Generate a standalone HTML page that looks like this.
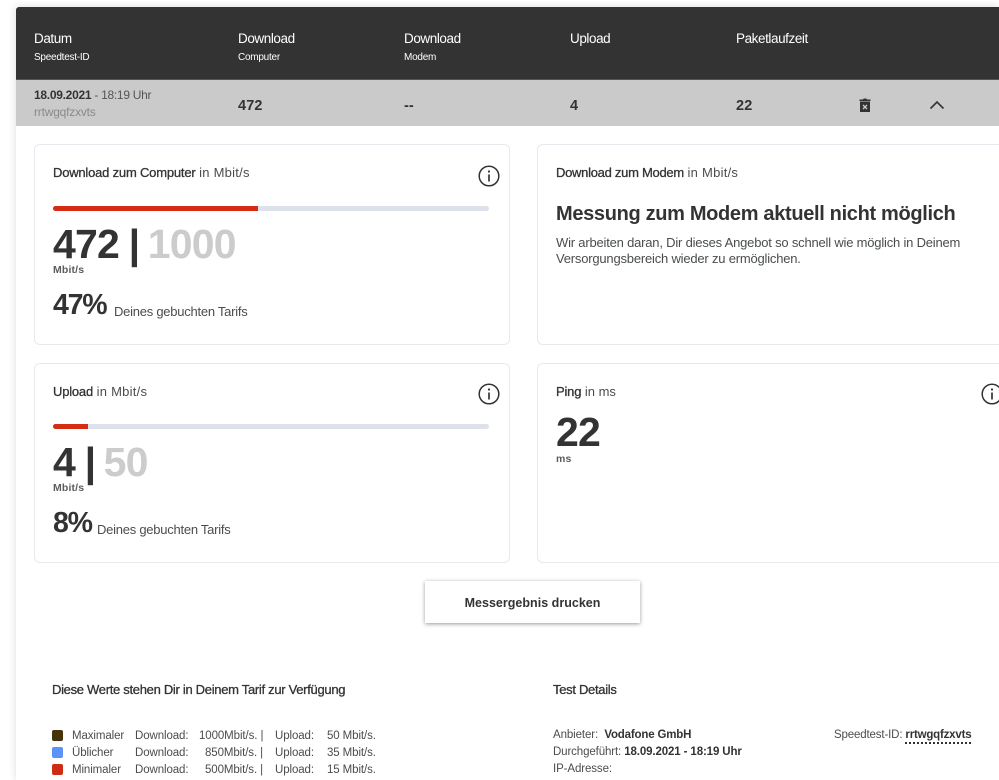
<!DOCTYPE html>
<html lang="de"><head><meta charset="utf-8"><title>Speedtest</title>
<style>
html,body{margin:0;padding:0;background:#fff}
body{width:999px;height:780px;overflow:hidden;position:relative;font-family:"Liberation Sans",sans-serif;color:#333}
.t{position:absolute;white-space:nowrap;line-height:1}
.b{font-weight:bold}
.card{position:absolute;box-sizing:border-box;border:1px solid #e6e9ee;border-radius:6px;background:#fff}
.h{color:#fff;font-size:13.5px;letter-spacing:-.42px}
.s{color:#fff;font-size:10px;letter-spacing:-.25px}
.g{color:#4a4d4e}
.l{font-size:11.5px;color:#4a4d4e;letter-spacing:-.1px}
.big{font-size:41px;font-weight:bold;letter-spacing:-.8px}
.c{color:#333;-webkit-text-stroke:.3px #333;letter-spacing:-.2px}
.u{letter-spacing:.25px}
.m{font-size:10.5px;font-weight:bold;color:#5a5d5e;letter-spacing:.15px}
</style></head><body>
<div style="position:absolute;left:16px;top:7px;width:983px;height:773px;box-shadow:0 0 8px rgba(0,0,0,.14);background:#fff"></div>
<div style="position:absolute;left:16px;top:7px;width:983px;height:72px;background:#333;border-radius:3px 0 0 0"></div>
<div style="position:absolute;left:16px;top:79px;width:983px;height:1px;background:#555"></div>
<div style="position:absolute;left:16px;top:80px;width:983px;height:46px;background:#cacaca"></div>

<div class="t h" style="left:34px;top:32px">Datum</div><div class="t s" style="left:34px;top:53px">Speedtest-ID</div>
<div class="t h" style="left:238px;top:32px">Download</div><div class="t s" style="left:238px;top:53px">Computer</div>
<div class="t h" style="left:404px;top:32px">Download</div><div class="t s" style="left:404px;top:53px">Modem</div>
<div class="t h" style="left:570px;top:32px">Upload</div>
<div class="t h" style="left:736px;top:32px">Paketlaufzeit</div>

<div class="t" style="left:34px;top:89px;font-size:12px;letter-spacing:-.28px;color:#555"><b style="color:#333">18.09.2021</b> - 18:19 Uhr</div>
<div class="t" style="left:34px;top:106px;font-size:12px;letter-spacing:-.2px;color:#8a8a8a">rrtwgqfzxvts</div>
<div class="t b" style="left:238px;top:99px;font-size:14.5px;letter-spacing:.15px">472</div>
<div class="t b" style="left:404px;top:99px;font-size:14.5px">--</div>
<div class="t b" style="left:570px;top:99px;font-size:14.5px">4</div>
<div class="t b" style="left:736px;top:99px;font-size:14.5px;letter-spacing:.15px">22</div>
<svg style="position:absolute;left:858px;top:98px" width="14" height="15" viewBox="0 0 14 15"><path fill="#333" d="M2 3.5h10V14H2zM1.500 1.500h3.500l.6-1h2.800l.6 1h3.500V3h-11z"/><path stroke="#cacaca" stroke-width="1.300" d="M5 7l4 4M9 7l-4 4"/></svg>
<svg style="position:absolute;left:929px;top:100px" width="16" height="10" viewBox="0 0 16 10"><path fill="none" stroke="#333" stroke-width="1.600" d="M1.500 8.500L8 2l6.500 6.500"/></svg>

<div class="card" style="left:34px;top:144px;width:476px;height:201px"></div>
<div class="card" style="left:537px;top:144px;width:480px;height:201px"></div>
<div class="card" style="left:34px;top:363px;width:476px;height:200px"></div>
<div class="card" style="left:537px;top:363px;width:480px;height:200px"></div>

<div class="t g" style="left:53px;top:166px;font-size:13px"><span class="c">Download zum Computer</span> <span class="u">in Mbit/s</span></div>
<svg style="position:absolute;left:478px;top:165px" width="22" height="22" viewBox="0 0 22 22"><circle cx="11" cy="11" r="9.800" fill="none" stroke="#333" stroke-width="1.500"/><path stroke="#333" stroke-width="1.700" d="M11 9.500v7"/><circle cx="11" cy="6.500" r="1.100" fill="#333"/></svg>
<div style="position:absolute;left:53px;top:206px;width:436px;height:5px;background:#dde1ea;border-radius:3px"></div>
<div style="position:absolute;left:53px;top:206px;width:205px;height:5px;background:#d42d12;border-radius:3px 0 0 3px"></div>
<div class="t big" style="left:53px;top:224px">472 <span style="letter-spacing:-2px;margin-left:-1px">|</span> <span style="color:#ccc;letter-spacing:-.8px;margin-left:-1px">1000</span></div>
<div class="t m" style="left:53px;top:265px">Mbit/s</div>
<div class="t b" style="left:53px;top:291px;font-size:28.5px;letter-spacing:-1.2px">47%</div>
<div class="t g" style="left:114px;top:305px;font-size:13px;letter-spacing:-.25px">Deines gebuchten Tarifs</div>

<div class="t g" style="left:556px;top:166px;font-size:13px"><span class="c" style="letter-spacing:-.28px">Download zum Modem</span> <span class="u">in Mbit/s</span></div>
<div class="t b" style="left:556px;top:204px;font-size:20px;letter-spacing:-.33px">Messung zum Modem aktuell nicht möglich</div>
<div class="t g" style="left:556px;top:236px;font-size:13px;letter-spacing:-.2px">Wir arbeiten daran, Dir dieses Angebot so schnell wie möglich in Deinem</div>
<div class="t g" style="left:556px;top:252px;font-size:13px;letter-spacing:-.2px">Versorgungsbereich wieder zu ermöglichen.</div>

<div class="t g" style="left:53px;top:385px;font-size:13px"><span class="c">Upload</span> <span class="u">in Mbit/s</span></div>
<svg style="position:absolute;left:478px;top:383px" width="22" height="22" viewBox="0 0 22 22"><circle cx="11" cy="11" r="9.800" fill="none" stroke="#333" stroke-width="1.500"/><path stroke="#333" stroke-width="1.700" d="M11 9.500v7"/><circle cx="11" cy="6.500" r="1.100" fill="#333"/></svg>
<div style="position:absolute;left:53px;top:424px;width:436px;height:5px;background:#dde1ea;border-radius:3px"></div>
<div style="position:absolute;left:53px;top:424px;width:35px;height:5px;background:#d42d12;border-radius:3px 0 0 3px"></div>
<div class="t big" style="left:53px;top:442px">4 <span style="letter-spacing:-2px;margin-left:-1px">|</span> <span style="color:#ccc;margin-left:-1px">50</span></div>
<div class="t m" style="left:53px;top:483px">Mbit/s</div>
<div class="t b" style="left:53px;top:509px;font-size:28.5px;letter-spacing:-1.2px">8%</div>
<div class="t g" style="left:97px;top:523px;font-size:13px;letter-spacing:-.25px">Deines gebuchten Tarifs</div>

<div class="t g" style="left:556px;top:385px;font-size:13px"><span class="c">Ping</span> in ms</div>
<svg style="position:absolute;left:981px;top:383px" width="22" height="22" viewBox="0 0 22 22"><circle cx="11" cy="11" r="9.800" fill="none" stroke="#333" stroke-width="1.500"/><path stroke="#333" stroke-width="1.700" d="M11 9.500v7"/><circle cx="11" cy="6.500" r="1.100" fill="#333"/></svg>
<div class="t big" style="left:556px;top:412px">22</div>
<div class="t m" style="left:556px;top:454px">ms</div>

<div style="position:absolute;left:425px;top:581px;width:215px;height:42px;background:#fff;box-shadow:0 1px 4px rgba(0,0,0,.4)"></div>
<div class="t b" style="left:425px;width:215px;text-align:center;top:597px;font-size:12.5px;letter-spacing:.02px">Messergebnis drucken</div>

<div class="t" style="left:52px;top:683px;font-size:13px;letter-spacing:-.3px;-webkit-text-stroke:.3px #333">Diese Werte stehen Dir in Deinem Tarif zur Verfügung</div>
<div class="t" style="left:553px;top:683px;font-size:13px;letter-spacing:-.3px;-webkit-text-stroke:.3px #333">Test Details</div>

<div style="position:absolute;left:52px;top:730px;width:11px;height:11px;background:#47330a;border-radius:2px"></div>
<div style="position:absolute;left:52px;top:747px;width:11px;height:11px;background:#5b93f8;border-radius:2px"></div>
<div style="position:absolute;left:52px;top:764px;width:11px;height:11px;background:#cf2c14;border-radius:2px"></div>

<div class="t l" style="left:72px;top:730px;margin-top:1px">Maximaler</div><div class="t l" style="left:135px;top:731px">Download:</div><div class="t l" style="left:199px;top:731px">1000Mbit/s. |</div><div class="t l" style="left:275px;top:731px">Upload:</div><div class="t l" style="left:327px;top:731px">50 Mbit/s.</div>
<div class="t l" style="left:72px;top:748px">Üblicher</div><div class="t l" style="left:135px;top:748px">Download:</div><div class="t l" style="left:205px;top:748px">850Mbit/s. |</div><div class="t l" style="left:275px;top:748px">Upload:</div><div class="t l" style="left:327px;top:748px">35 Mbit/s.</div>
<div class="t l" style="left:72px;top:765px">Minimaler</div><div class="t l" style="left:135px;top:765px">Download:</div><div class="t l" style="left:205px;top:765px">500Mbit/s. |</div><div class="t l" style="left:275px;top:765px">Upload:</div><div class="t l" style="left:327px;top:765px">15 Mbit/s.</div>

<div class="t l" style="left:553px;top:730px">Anbieter: &nbsp;<b style="color:#333;letter-spacing:-.18px">Vodafone GmbH</b></div>
<div class="t l" style="left:553px;top:747px;letter-spacing:-.12px">Durchgeführt: <b style="color:#333">18.09.2021 - 18:19 Uhr</b></div>
<div class="t l" style="left:553px;top:764px">IP-Adresse:</div>
<div class="t l" style="left:834px;top:730px;letter-spacing:-.15px">Speedtest-ID: <b style="color:#333;border-bottom:2px dotted #333;padding-bottom:1px;letter-spacing:-.2px">rrtwgqfzxvts</b></div>
</body></html>
